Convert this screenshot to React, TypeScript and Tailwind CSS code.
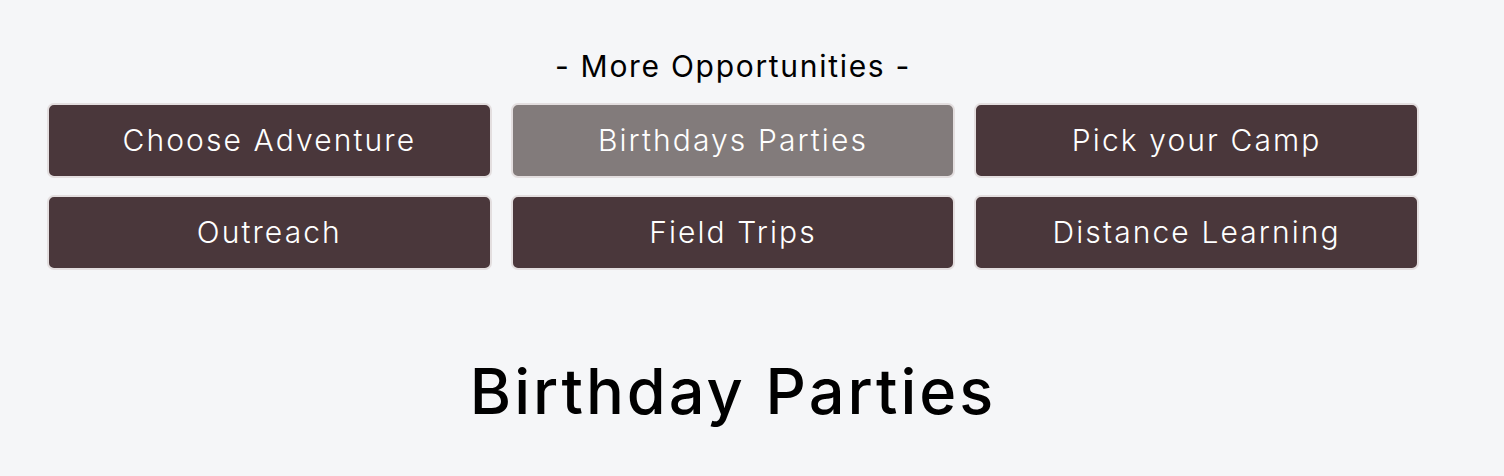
import React from "react";

const items = [
  { label: "Choose Adventure", active: false },
  { label: "Birthdays Parties", active: true },
  { label: "Pick your Camp", active: false },
  { label: "Outreach", active: false },
  { label: "Field Trips", active: false },
  { label: "Distance Learning", active: false },
];

export default function App() {
  return (
    <div
      className="min-h-[476px] w-full bg-[#f5f6f8] pt-[44px]"
      style={{ fontFamily: "Inter, 'Noto Sans', sans-serif" }}
    >
      <div className="ml-[47px] w-[1372px]">
        <h3 className="text-center text-[30px] leading-[44px] font-normal tracking-[1.7px] text-black">
          - More Opportunities -
        </h3>
        <div className="mt-[15px] grid grid-cols-3 gap-x-[19px] gap-y-[17px]">
          {items.map((it) => (
            <a
              key={it.label}
              href="#"
              className={
                "flex h-[75px] items-center justify-center rounded-[7px] border-2 border-[#e3dedf] text-[30px] font-light tracking-[2.1px] text-white " +
                (it.active ? "bg-[#827b7b]" : "bg-[#4a373b]")
              }
            >
              {it.label}
            </a>
          ))}
        </div>
        <h2 className="mt-[81px] text-center text-[63px] leading-[80px] font-medium tracking-[3px] text-black">
          Birthday Parties
        </h2>
      </div>
    </div>
  );
}
